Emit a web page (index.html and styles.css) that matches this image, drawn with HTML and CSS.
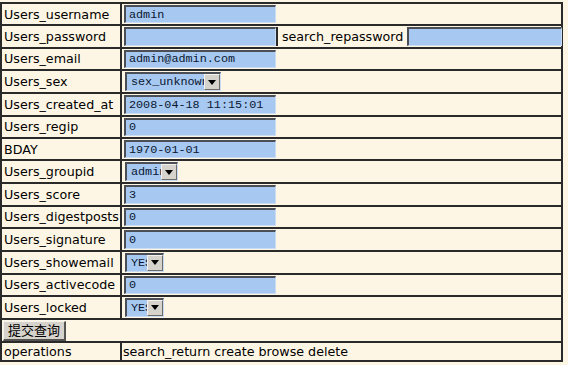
FILE: index.html
```html
<!DOCTYPE html>
<html lang="zh">
  <head>
    <meta charset="UTF-8" />
    <title>Users edit</title>
    <link rel="stylesheet" href="styles.css">
  </head>
  <body>
    <form class="edit-form">
      <table class="edit-table">
        <tr>
          <td class="label">Users_username</td>
          <td><input class="field" type="text" value="admin"></td>
        </tr>
        <tr>
          <td class="label">Users_password</td>
          <td>
            <div class="pair">
              <input class="field" type="password">
              <div class="extra">
                <span class="extra-label">search_repassword</span>
                <input class="field wide" type="password">
              </div>
            </div>
          </td>
        </tr>
        <tr>
          <td class="label">Users_email</td>
          <td><input class="field" type="text" value="admin@admin.com"></td>
        </tr>
        <tr>
          <td class="label">Users_sex</td>
          <td>
            <span class="dropdown dd-sex">
              <select><option>sex_unknown</option></select>
              <span class="dropdown-btn"><svg width="8" height="5" viewBox="0 0 8 5"><path d="M0 0h8L4 5z" fill="#000"/></svg></span>
            </span>
          </td>
        </tr>
        <tr>
          <td class="label">Users_created_at</td>
          <td><input class="field" type="text" value="2008-04-18 11:15:01"></td>
        </tr>
        <tr>
          <td class="label">Users_regip</td>
          <td><input class="field" type="text" value="0"></td>
        </tr>
        <tr>
          <td class="label">BDAY</td>
          <td><input class="field" type="text" value="1970-01-01"></td>
        </tr>
        <tr>
          <td class="label">Users_groupid</td>
          <td>
            <span class="dropdown dd-group">
              <select><option>admin</option></select>
              <span class="dropdown-btn"><svg width="8" height="5" viewBox="0 0 8 5"><path d="M0 0h8L4 5z" fill="#000"/></svg></span>
            </span>
          </td>
        </tr>
        <tr>
          <td class="label">Users_score</td>
          <td><input class="field" type="text" value="3"></td>
        </tr>
        <tr>
          <td class="label">Users_digestposts</td>
          <td><input class="field" type="text" value="0"></td>
        </tr>
        <tr>
          <td class="label">Users_signature</td>
          <td><input class="field" type="text" value="0"></td>
        </tr>
        <tr>
          <td class="label">Users_showemail</td>
          <td>
            <span class="dropdown dd-yes">
              <select><option>YES</option></select>
              <span class="dropdown-btn"><svg width="8" height="5" viewBox="0 0 8 5"><path d="M0 0h8L4 5z" fill="#000"/></svg></span>
            </span>
          </td>
        </tr>
        <tr>
          <td class="label">Users_activecode</td>
          <td><input class="field" type="text" value="0"></td>
        </tr>
        <tr>
          <td class="label">Users_locked</td>
          <td>
            <span class="dropdown dd-yes">
              <select><option>YES</option></select>
              <span class="dropdown-btn"><svg width="8" height="5" viewBox="0 0 8 5"><path d="M0 0h8L4 5z" fill="#000"/></svg></span>
            </span>
          </td>
        </tr>
        <tr class="submit-row">
          <td colspan="2"><button type="button" class="submit-btn">提交查询</button></td>
        </tr>
        <tr class="ops-row">
          <td class="label">operations</td>
          <td>search_return create browse delete</td>
        </tr>
      </table>
    </form>
  </body>
</html>
```

FILE: styles.css
```css
body {
  margin: 0;
  padding-top: 2px;
  background: #fef6e5;
  font-family: "DejaVu Sans", Verdana, sans-serif;
  font-size: 12.7px;
  color: #000;
}

.edit-form {
  margin: 0;
}

.edit-table {
  width: 562px;
  border: 1px solid #2a2a2a;
  border-spacing: 0;
  background: #fef6e5;
}

.edit-table td {
  border: 1px solid #2a2a2a;
  padding: 1px;
  height: 18.4px;
  white-space: nowrap;
  vertical-align: middle;
  line-height: 15px;
}

.edit-table td.label {
  width: 114px;
  padding-left: 2px;
}

.field {
  box-sizing: border-box;
  display: block;
  width: 152px;
  height: 18.4px;
  margin: 0 0 0 1px;
  padding: 0 0 0 3px;
  background: #a7c9f1;
  border-style: solid;
  border-width: 2px 1px 1px 2px;
  border-color: #4b4f55 #c9dcf3 #c9dcf3 #4b4f55;
  font-family: "Liberation Mono", "Courier New", monospace;
  font-size: 11.8px;
  color: #0a1630;
  outline: none;
}

.pair {
  display: flex;
  align-items: stretch;
  margin: -2px -2px -2px 0;
}

.pair > .field {
  align-self: center;
}

.extra {
  flex: 1;
  display: flex;
  align-items: center;
  border-left: 2px solid #2a2a2a;
}

.extra-label {
  padding: 0 4px 0 4px;
}

.field.wide {
  flex: 1;
  width: auto;
  margin: 0;
}

.dropdown {
  display: flex;
  height: 19px;
  margin-left: 2px;
  background: #a7c9f1;
  border-style: solid;
  border-width: 2px 1px 1px 2px;
  border-color: #4b4f55 #c9dcf3 #c9dcf3 #4b4f55;
  box-sizing: border-box;
}

.dropdown select {
  appearance: none;
  -webkit-appearance: none;
  flex: 1;
  min-width: 0;
  height: 100%;
  margin: 0;
  padding: 0 0 0 4px;
  border: none;
  background: transparent;
  font-family: "Liberation Mono", "Courier New", monospace;
  font-size: 11.8px;
  color: #0a1630;
  outline: none;
}

.dropdown-btn {
  box-sizing: border-box;
  width: 16px;
  display: flex;
  align-items: center;
  justify-content: center;
  background: #d6d3cc;
  border-style: solid;
  border-width: 1px;
  border-color: #f4f2ee #6e6c68 #6e6c68 #f4f2ee;
}

.dd-sex {
  width: 96px;
}

.dd-group {
  width: 53px;
}

.dd-yes {
  width: 39px;
}

.submit-row td {
  height: 20px;
  padding: 1px 0 0 1px;
}

.submit-btn {
  display: block;
  height: 20px;
  padding: 0 4px;
  background: #d6d3cc;
  border-style: solid;
  border-width: 1px 2px 2px 1px;
  border-color: #f4f2ee #55534f #55534f #f4f2ee;
  font-family: "Noto Sans CJK SC", sans-serif;
  font-size: 13px;
  line-height: 16px;
  color: #000;
}

.ops-row td {
  height: 15px;
}
```
